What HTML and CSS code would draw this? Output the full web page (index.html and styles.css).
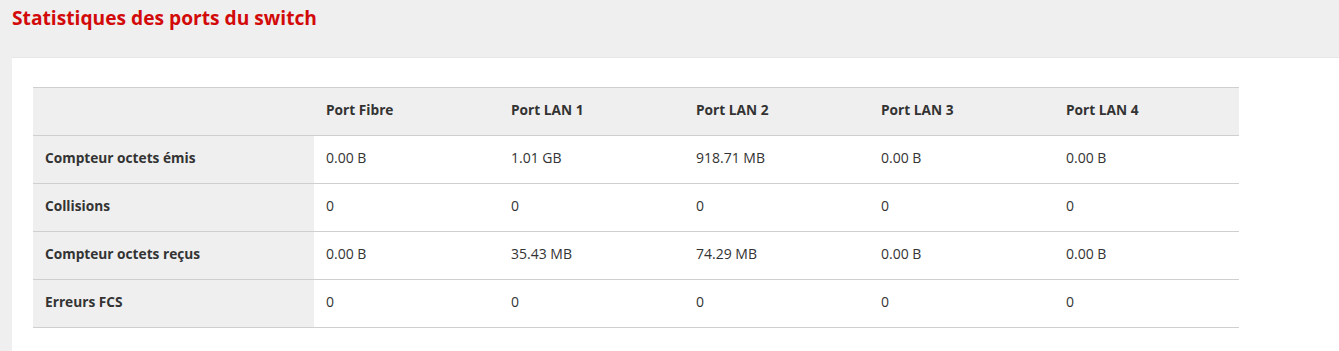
FILE: index.html
```html
<!DOCTYPE html>
<html lang="fr">
<head>
<meta charset="utf-8">
<link rel="stylesheet" href="styles.css">
</head>
<body>
<div class="page">
  <h1 class="title">Statistiques des ports du switch</h1>
  <div class="panel">
    <table class="stats">
      <thead>
        <tr><th class="label"></th><th>Port Fibre</th><th>Port LAN 1</th><th>Port LAN 2</th><th>Port LAN 3</th><th>Port LAN 4</th></tr>
      </thead>
      <tbody>
        <tr><th class="label">Compteur octets émis</th><td>0.00 B</td><td>1.01 GB</td><td>918.71 MB</td><td>0.00 B</td><td>0.00 B</td></tr>
        <tr><th class="label">Collisions</th><td>0</td><td>0</td><td>0</td><td>0</td><td>0</td></tr>
        <tr><th class="label">Compteur octets reçus</th><td>0.00 B</td><td>35.43 MB</td><td>74.29 MB</td><td>0.00 B</td><td>0.00 B</td></tr>
        <tr><th class="label">Erreurs FCS</th><td>0</td><td>0</td><td>0</td><td>0</td><td>0</td></tr>
      </tbody>
    </table>
  </div>
</div>
</body>
</html>
```
FILE: styles.css
```css
* { box-sizing: border-box; }
html, body { margin: 0; padding: 0; }
body {
  background: #efefef;
  font-family: "Open Sans", "Noto Sans", sans-serif;
  color: #333;
  height: 351px;
  overflow: hidden;
}
.page { padding-left: 12px; }
.title {
  margin: 0;
  height: 57px;
  padding-top: 5px;
  font-size: 19.2px;
  font-weight: 700;
  line-height: 26px;
  color: #d20a0a;
  letter-spacing: 0;
}
.panel {
  background: #fff;
  border-top: 1px solid #e6e6e6;
  padding: 29px 0 40px 21px;
  min-height: 300px;
}
.stats {
  border-collapse: collapse;
  width: 1206px;
  table-layout: fixed;
  font-size: 14px;
}
.stats th, .stats td {
  height: 48px;
  padding: 0 12px 4px;
  text-align: left;
  vertical-align: middle;
  border-top: 1px solid #cfcfcf;
  border-bottom: 1px solid #cfcfcf;
}
.stats thead th {
  background: #efefef;
  font-weight: 700;
  font-size: 13.7px;
}
.stats th.label {
  width: 281px;
  background: #efefef;
  font-weight: 700;
  font-size: 13.7px;
}
.stats td { font-weight: 400; }
```
